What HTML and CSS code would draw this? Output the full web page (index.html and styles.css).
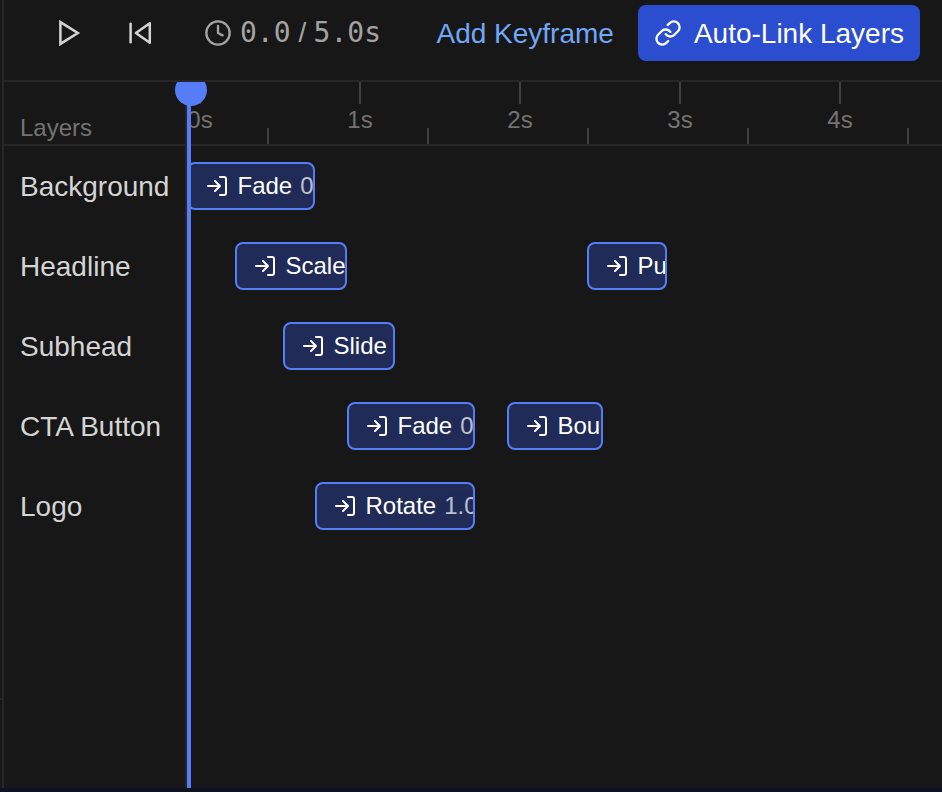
FILE: index.html
```html
<!DOCTYPE html>
<html lang="en">
<head>
<meta charset="utf-8">
<title>Timeline</title>
<link rel="stylesheet" href="styles.css">
</head>
<body>
<svg class="defs" aria-hidden="true">
  <symbol id="enter" viewBox="0 0 24 24"><path d="M15 3h4a2 2 0 0 1 2 2v14a2 2 0 0 1-2 2h-4M10 17l5-5-5-5M15 12H3"/></symbol>
</svg>
<div class="app">
  <aside class="gutter"></aside>
  <main class="panel">
    <header class="toolbar">
      <button class="icon-btn"><svg class="transport" viewBox="0 0 32 32"><path class="sharp" d="M7.4 5.1 24.8 16 7.4 26.9z"/></svg></button>
      <button class="icon-btn prev"><svg class="transport" viewBox="0 0 32 32"><path d="M6.6 6.8v18.4"/><path d="M25.8 6.3v19.4L11.9 16z"/></svg></button>
      <div class="time">
        <svg class="icon" viewBox="0 0 24 24"><circle cx="12" cy="12" r="10"/><path d="M12 6v6l4 2"/></svg>
        <span class="mono now">0.0</span><span class="slash">/</span><span class="mono">5.0s</span>
      </div>
      <button class="add"><span class="text">Add Keyframe</span></button>
      <button class="primary"><svg class="icon" viewBox="0 0 24 24"><path d="M10 13a5 5 0 0 0 7.54.54l3-3a5 5 0 0 0-7.07-7.07l-1.72 1.71"/><path d="M14 11a5 5 0 0 0-7.54-.54l-3 3a5 5 0 0 0 7.07 7.07l1.71-1.71"/></svg><span class="text">Auto-Link Layers</span></button>
    </header>
    <section class="timeline">
      <div class="layers">
        <div class="layers-head"><span>Layers</span></div>
        <div class="layer"><span>Background</span></div>
        <div class="layer"><span>Headline</span></div>
        <div class="layer"><span>Subhead</span></div>
        <div class="layer"><span>CTA Button</span></div>
        <div class="layer"><span>Logo</span></div>
      </div>
      <div class="tracks">
        <div class="ruler">
          <div class="second"><div class="major">0s</div></div>
          <div class="second"><div class="major">1s</div></div>
          <div class="second"><div class="major">2s</div></div>
          <div class="second"><div class="major">3s</div></div>
          <div class="second"><div class="major">4s</div></div>
        </div>
        <div class="lane">
          <div class="clip" style="grid-column: 1 / span 8"><svg><use href="#enter"/></svg><span>Fade</span><small>0.8s</small></div>
        </div>
        <div class="lane">
          <div class="clip" style="grid-column: 4 / span 7"><svg><use href="#enter"/></svg><span>Scale</span></div>
          <div class="clip" style="grid-column: 26 / span 5"><svg><use href="#enter"/></svg><span>Pulse</span></div>
        </div>
        <div class="lane">
          <div class="clip" style="grid-column: 7 / span 7"><svg><use href="#enter"/></svg><span>Slide</span></div>
        </div>
        <div class="lane">
          <div class="clip" style="grid-column: 11 / span 8"><svg><use href="#enter"/></svg><span>Fade</span><small>0.8s</small></div>
          <div class="clip" style="grid-column: 21 / span 6"><svg><use href="#enter"/></svg><span>Bounce</span></div>
        </div>
        <div class="lane">
          <div class="clip" style="grid-column: 9 / span 10"><svg><use href="#enter"/></svg><span>Rotate</span><small>1.0s</small></div>
        </div>
      </div>
      <div class="playhead"></div>
    </section>
  </main>
</div>
</body>
</html>
```
FILE: styles.css
```css
* { box-sizing: border-box; }
body {
  margin: 0;
  height: 792px;
  overflow: hidden;
  background: #0d1321;
  font-family: "Liberation Sans", Arial, sans-serif;
  font-size: 28px;
  color: #d4d4d4;
}
.defs { display: none; }
svg { fill: none; stroke: currentColor; stroke-width: 2; stroke-linecap: round; stroke-linejoin: round; flex: none; }
button { border: 0; background: none; padding: 0; font: inherit; color: inherit; }
.app { display: flex; height: 788px; background: #171717; }
.gutter { width: 2px; height: 700px; border-bottom: 2px solid #262626; }
.panel { flex: 1; min-width: 0; display: flex; flex-direction: column; border-left: 2px solid #262626; }

.toolbar {
  display: flex;
  align-items: center;
  height: 82px;
  padding: 0 22px 14px 49px;
  border-bottom: 2px solid #262626;
}
.icon-btn { display: flex; }
.prev { margin-left: 39px; }
.transport { width: 32px; height: 32px; stroke-width: 2.5; }
.sharp { stroke-linejoin: miter; }
.icon { width: 28px; height: 28px; }
.text { display: block; padding-top: 2px; }
.time { display: flex; align-items: center; margin-left: 48px; color: #a3a3a3; }
.mono { font-family: "DejaVu Sans Mono", monospace; }
.now { margin-left: 8px; }
.slash { width: 8px; margin: 0 7px 0 8px; }
.time .mono { padding-bottom: 2px; }
.add { margin-left: auto; color: #72a6f7; }
.primary {
  display: flex;
  align-items: center;
  gap: 12px;
  height: 56px;
  margin-left: 24px;
  padding: 0 16px;
  border-radius: 8px;
  background: #2b4dd0;
  color: #fff;
}

.timeline { position: relative; flex: 1; min-height: 0; display: flex; overflow: hidden; }
.layers { width: 183px; border-right: 2px solid #262626; }
.layers-head {
  display: flex;
  align-items: flex-end;
  height: 64px;
  padding: 0 16px 2px;
  border-bottom: 2px solid #262626;
  font-size: 24px;
  color: #737373;
}
.layer { display: flex; align-items: center; height: 80px; padding: 2px 0 0 16px; white-space: nowrap; }
.tracks { flex: 1; min-width: 0; overflow: hidden; }
.ruler { display: flex; height: 64px; border-bottom: 2px solid #262626; color: #737373; font-size: 24px; }
.second { flex: none; width: 160px; display: flex; align-items: flex-end; }
.second::after { content: ""; width: 2px; height: 16px; margin-left: 54px; background: #404040; }
.major { width: 26px; height: 62px; display: flex; flex-direction: column; align-items: center; line-height: 32px; }
.major::before { content: ""; flex: none; width: 2px; height: 22px; background: #404040; }
.lane { display: grid; grid-template-columns: repeat(50, 16px); height: 80px; align-items: center; }
.clip {
  display: flex;
  align-items: center;
  gap: 8px;
  height: 48px;
  min-width: 0;
  padding-left: 16px;
  overflow: hidden;
  border: 2px solid #567df7;
  border-radius: 8px;
  background: #212b58;
  color: #fff;
  font-size: 24px;
  white-space: nowrap;
}
.clip svg { width: 24px; height: 24px; margin-right: 0.5px; }
.clip small { font-size: 24px; opacity: .7; }
.playhead { position: absolute; top: 0; bottom: 0; left: 183px; width: 4px; background: #567df7; }
.playhead::before {
  content: "";
  position: absolute;
  top: -8px;
  left: -12px;
  width: 32px;
  height: 32px;
  border-radius: 50%;
  background: #567df7;
}
```
